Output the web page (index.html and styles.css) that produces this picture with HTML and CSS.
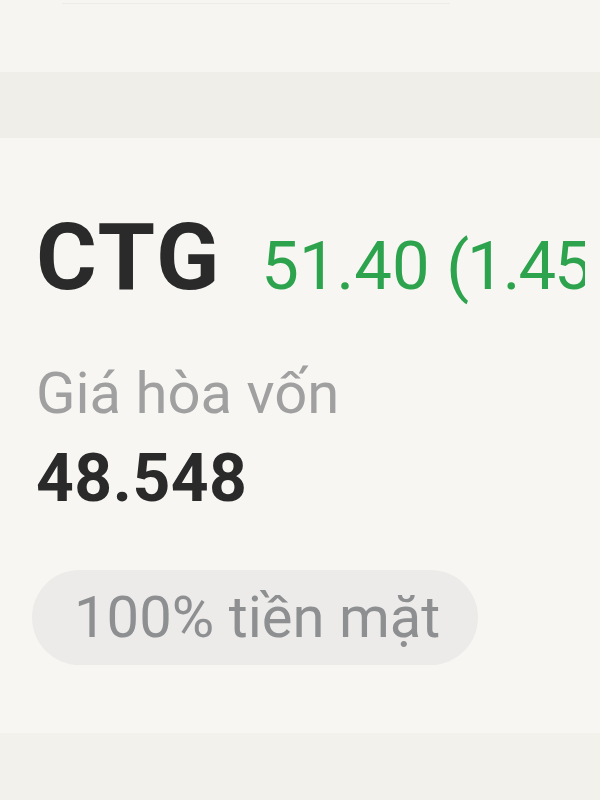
FILE: index.html
```html
<!DOCTYPE html>
<html lang="vi">
<head>
  <meta charset="UTF-8" />
  <meta name="viewport" content="width=device-width, initial-scale=1.0" />
  <title>CTG</title>
  <link rel="stylesheet" href="styles.css">
</head>
<body>
  <div class="top-area">
    <div class="prev-edge"></div>
  </div>
  <div class="divider-band"></div>

  <div class="stock-card">
    <div class="stock-head">
      <span class="ticker">CTG</span>
      <span class="price up">51.40 <span class="change">(1.45%)</span></span>
    </div>
    <div class="label">Giá hòa vốn</div>
    <div class="value">48.548</div>
    <div class="pill">100% tiền mặt</div>
  </div>

  <div class="bottom-band"></div>
</body>
</html>
```

FILE: styles.css
```css
html, body {
  margin: 0;
  padding: 0;
  overflow: hidden;
  font-family: Roboto, "Noto Sans", sans-serif;
  background: #f6f5f1;
}
body {
  width: 600px;
  height: 800px;
  display: flex;
  flex-direction: column;
}
.top-area {
  height: 72px;
  background: #f6f5f2;
}
.prev-edge {
  margin: 0 150px 0 62px;
  height: 3px;
  border-bottom: 1px solid #ecebe7;
}
.divider-band {
  height: 66px;
  background: #efeee9;
}
.stock-card {
  height: 595px;
  background: #f7f6f3;
  padding: 74px 0 0 36px;
  box-sizing: border-box;
  color: #2a2a2a;
}
.stock-head {
  display: flex;
  align-items: baseline;
  gap: 40px;
  white-space: nowrap;
  line-height: 92px;
  height: 92px;
}
.ticker {
  font-size: 93px;
  font-weight: 700;
  letter-spacing: 2px;
}
.price {
  display: inline-block;
  width: 324px;
  overflow: hidden;
  font-size: 67px;
  line-height: 100px;
  font-weight: 400;
}
.change {
  letter-spacing: -2px;
}
.up {
  color: #2ea34e;
}
.label {
  margin-top: 61px;
  font-size: 58px;
  line-height: 56px;
  color: #a0a0a0;
}
.value {
  margin-top: 25px;
  font-size: 66px;
  line-height: 66px;
  font-weight: 700;
  letter-spacing: 0.5px;
}
.pill {
  display: inline-block;
  margin: 58px 0 0 -4px;
  padding: 0 38px 0 42px;
  height: 95px;
  line-height: 95px;
  border-radius: 48px;
  background: #ecebea;
  color: #8e8f91;
  font-size: 58px;
}
.bottom-band {
  flex: 1;
  background: #f3f1ec;
}
```
